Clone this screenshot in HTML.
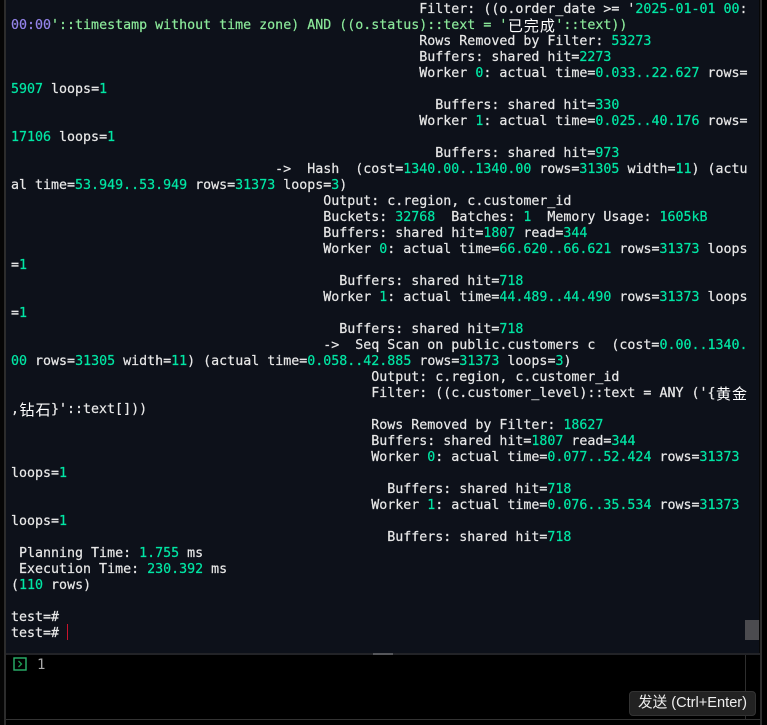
<!DOCTYPE html>
<html><head><meta charset="utf-8"><style>
html,body{margin:0;padding:0;background:#000;width:767px;height:725px;overflow:hidden}
#t{position:absolute;left:6px;top:0;width:753px;height:653px;background:#0d111a;overflow:hidden}
#w{position:absolute;left:0;top:2px;width:753px;height:651px}
.l{position:absolute;left:5px;height:16px;white-space:pre;font:13.3px/16px "DejaVu Sans Mono","Noto Sans CJK SC",monospace;color:#e8e8e8;-webkit-text-stroke:.2px currentColor}
.l b{font-weight:normal;color:#00e6a4}
.l i{font-style:normal;color:#8be99a}
.l u{text-decoration:none;color:#9484ea}
.l s{text-decoration:none;display:inline-block;width:16px;height:16px;text-align:center;color:#fff;font:15px/16px "WenQuanYi Zen Hei","Noto Sans CJK SC",sans-serif;vertical-align:top;-webkit-text-stroke:0}
</style></head><body>
<div style="position:absolute;left:0;top:0;width:4px;height:725px;background:#050505"></div>
<div style="position:absolute;left:4px;top:0;width:2px;height:725px;background:#2c2c2c"></div>
<div style="position:absolute;left:760px;top:0;width:2px;height:725px;background:#2e2e2e"></div>
<div style="position:absolute;left:759px;top:0;width:1px;height:653px;background:#070707"></div>
<div id="t"><div id="w">
<div class="l" style="top:0">                                                   Filter: ((o.order_date &gt;= '<b>2025-01-01 00</b>:</div>
<div class="l" style="top:16px"><u>00:00</u><i>'::timestamp without time zone) AND ((o.status)::text = '</i><s>已</s><s>完</s><s>成</s><i>'::text))</i></div>
<div class="l" style="top:32px">                                                   Rows Removed by Filter: <b>53273</b></div>
<div class="l" style="top:48px">                                                   Buffers: shared hit=<b>2273</b></div>
<div class="l" style="top:64px">                                                   Worker <b>0</b>: actual time=<b>0.033..22.627</b> rows=</div>
<div class="l" style="top:80px"><b>5907</b> loops=<b>1</b></div>
<div class="l" style="top:96px">                                                     Buffers: shared hit=<b>330</b></div>
<div class="l" style="top:112px">                                                   Worker <b>1</b>: actual time=<b>0.025..40.176</b> rows=</div>
<div class="l" style="top:128px"><b>17106</b> loops=<b>1</b></div>
<div class="l" style="top:144px">                                                     Buffers: shared hit=<b>973</b></div>
<div class="l" style="top:160px">                                 -&gt;  Hash  (cost=<b>1340.00..1340.00</b> rows=<b>31305</b> width=<b>11</b>) (actu</div>
<div class="l" style="top:176px">al time=<b>53.949..53.949</b> rows=<b>31373</b> loops=<b>3</b>)</div>
<div class="l" style="top:192px">                                       Output: c.region, c.customer_id</div>
<div class="l" style="top:208px">                                       Buckets: <b>32768</b>  Batches: <b>1</b>  Memory Usage: <b>1605kB</b></div>
<div class="l" style="top:224px">                                       Buffers: shared hit=<b>1807</b> read=<b>344</b></div>
<div class="l" style="top:240px">                                       Worker <b>0</b>: actual time=<b>66.620..66.621</b> rows=<b>31373</b> loops</div>
<div class="l" style="top:256px">=<b>1</b></div>
<div class="l" style="top:272px">                                         Buffers: shared hit=<b>718</b></div>
<div class="l" style="top:288px">                                       Worker <b>1</b>: actual time=<b>44.489..44.490</b> rows=<b>31373</b> loops</div>
<div class="l" style="top:304px">=<b>1</b></div>
<div class="l" style="top:320px">                                         Buffers: shared hit=<b>718</b></div>
<div class="l" style="top:336px">                                       -&gt;  Seq Scan on public.customers c  (cost=<b>0.00..1340.</b></div>
<div class="l" style="top:352px"><b>00</b> rows=<b>31305</b> width=<b>11</b>) (actual time=<b>0.058..42.885</b> rows=<b>31373</b> loops=<b>3</b>)</div>
<div class="l" style="top:368px">                                             Output: c.region, c.customer_id</div>
<div class="l" style="top:384px">                                             Filter: ((c.customer_level)::text = ANY ('{<s>黄</s><s>金</s></div>
<div class="l" style="top:400px">,<s>钻</s><s>石</s>}'::text[]))</div>
<div class="l" style="top:416px">                                             Rows Removed by Filter: <b>18627</b></div>
<div class="l" style="top:432px">                                             Buffers: shared hit=<b>1807</b> read=<b>344</b></div>
<div class="l" style="top:448px">                                             Worker <b>0</b>: actual time=<b>0.077..52.424</b> rows=<b>31373</b></div>
<div class="l" style="top:464px">loops=<b>1</b></div>
<div class="l" style="top:480px">                                               Buffers: shared hit=<b>718</b></div>
<div class="l" style="top:496px">                                             Worker <b>1</b>: actual time=<b>0.076..35.534</b> rows=<b>31373</b></div>
<div class="l" style="top:512px">loops=<b>1</b></div>
<div class="l" style="top:528px">                                               Buffers: shared hit=<b>718</b></div>
<div class="l" style="top:544px"> Planning Time: <b>1.755</b> ms</div>
<div class="l" style="top:560px"> Execution Time: <b>230.392</b> ms</div>
<div class="l" style="top:576px">(<b>110</b> rows)</div>
<div class="l" style="top:608px">test=#</div>
<div class="l" style="top:624px">test=#</div>
</div>
<div style="position:absolute;left:61px;top:624px;width:1px;height:16px;background:#c8142c"></div>
<div style="position:absolute;left:739px;top:620px;width:14px;height:20px;background:#4b4b4f"></div>
</div>
<div style="position:absolute;left:6px;top:653px;width:754px;height:2px;background:#222327"></div>
<div style="position:absolute;left:373px;top:653px;width:20px;height:2px;background:#55565a"></div>
<div style="position:absolute;left:6px;top:719px;width:754px;height:1px;background:#333"></div>
<div style="position:absolute;left:745px;top:655px;width:1px;height:64px;background:#2e2e2e"></div>
<svg style="position:absolute;left:13px;top:657px" width="14" height="14" viewBox="0 0 14 14"><rect x="1" y="1" width="12" height="12" fill="none" stroke="#2ab36c" stroke-width="1.4"/><path d="M5.5 4 L8.5 7 L5.5 10" fill="none" stroke="#1f9d55" stroke-width="1.3"/></svg>
<div style="position:absolute;left:37px;top:656px;font:14px/16px 'DejaVu Sans Mono',monospace;color:#a8a8a8;margin-top:1px">1</div>
<div style="position:absolute;left:629px;top:691px;width:125px;height:23px;background:#222;border:1px solid #333;border-radius:4px;color:#eee;font:14.6px/23px 'Liberation Sans','Noto Sans CJK SC',sans-serif;text-align:center;white-space:pre">发送 (Ctrl+Enter)</div>
</body></html>
